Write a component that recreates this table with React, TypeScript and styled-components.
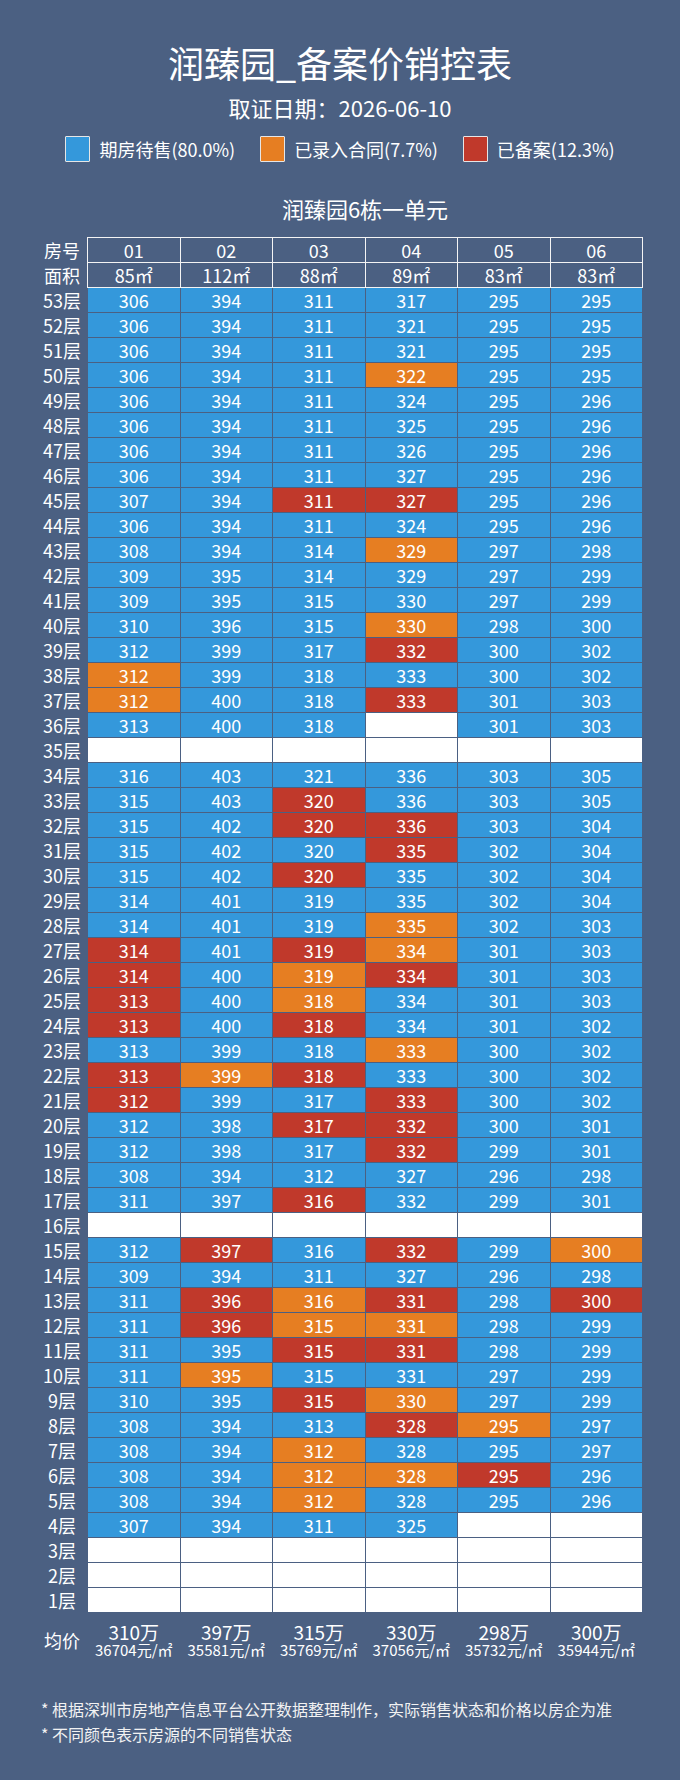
import styled, { createGlobalStyle } from "styled-components";

const BG = "#4b6082";

const GlobalStyle = createGlobalStyle`
  * { box-sizing: border-box; }
  body {
    margin: 0;
    background: ${BG};
    font-family: "Noto Sans CJK SC", "Noto Sans", sans-serif;
    color: #fff;
  }
`;

type Status = "sale" | "contract" | "filed" | "none";

const STATUS_COLORS: Record<Status, string> = {
  sale: "#3498db",
  contract: "#e67e22",
  filed: "#c0392b",
  none: "#ffffff",
};

const Page = styled.div`
  width: 680px;
  min-height: 1780px;
  padding-top: 40px;
  display: flex;
  flex-direction: column;
`;

const Title = styled.h1`
  margin: 0;
  font-size: 36px;
  line-height: 44px;
  font-weight: 400;
  text-align: center;
`;

const SubTitle = styled.div`
  margin-top: 8px;
  font-size: 22px;
  line-height: 30px;
  text-align: center;
`;

const Legend = styled.div`
  margin-top: 14px;
  display: flex;
  justify-content: center;
  gap: 25px;
`;

const LegendItem = styled.div`
  display: flex;
  align-items: center;
  gap: 9px;
  font-size: 18px;
  line-height: 26px;
`;

const Swatch = styled.span<{ $status: Status }>`
  width: 25px;
  height: 26px;
  border: 1px solid #e6e6e6;
  border-radius: 1px;
  background: ${({ $status }) => STATUS_COLORS[$status]};
`;

const Sheet = styled.div`
  padding: 0 38px 0 37px;
`;

const SectionTitle = styled.div`
  margin: 31px 0 14px 51px;
  font-size: 22px;
  line-height: 30px;
  text-align: center;
`;

const HeadRow = styled.div`
  display: grid;
  grid-template-columns: 50px 1fr;
  column-gap: 1px;
`;

const HeadLabels = styled.div`
  display: grid;
  grid-template-rows: 24px 24px;
  row-gap: 1px;
  padding-top: 1px;
`;

const HeadBox = styled.div`
  margin: 0 -1px;
  padding: 1px;
  display: grid;
  grid-template-columns: repeat(6, 1fr);
  grid-auto-rows: 24px;
  gap: 1px;
  background: #f4f4f4;
`;

const HeadCell = styled.div`
  background: ${BG};
  display: flex;
  align-items: center;
  justify-content: center;
  font-size: 18px;
`;

const RowLabel = styled.div`
  display: flex;
  align-items: center;
  justify-content: center;
  font-size: 18px;
  white-space: nowrap;
`;

const Grid = styled.div`
  display: grid;
  grid-template-columns: 50px repeat(6, 1fr);
  grid-auto-rows: 24px;
  gap: 1px;
`;

const Cell = styled.div<{ $status: Status }>`
  background: ${({ $status }) => STATUS_COLORS[$status]};
  display: flex;
  align-items: center;
  justify-content: center;
  font-size: 18px;
  color: #fff;
`;

const AvgGrid = styled.div`
  margin-top: 10px;
  display: grid;
  grid-template-columns: 50px repeat(6, 1fr);
  column-gap: 1px;
`;

const AvgCell = styled.div`
  display: flex;
  flex-direction: column;
  align-items: center;
  white-space: nowrap;
`;

const AvgPrice = styled.span`
  font-size: 19px;
  line-height: 20px;
`;

const AvgUnit = styled.span`
  font-size: 15px;
  line-height: 16px;
`;

const Notes = styled.div`
  margin-top: 39px;
  padding-left: 41px;
  font-size: 16px;
  line-height: 25px;
  color: #f2f2f2;
`;

const UNITS = ["01", "02", "03", "04", "05", "06"];
const AREAS = [85, 112, 88, 89, 83, 83];

// 53层 -> 1层, o = 已录入合同, r = 已备案, - = 无数据
const FLOORS = [
  "306 394 311 317 295 295",
  "306 394 311 321 295 295",
  "306 394 311 321 295 295",
  "306 394 311 322o 295 295",
  "306 394 311 324 295 296",
  "306 394 311 325 295 296",
  "306 394 311 326 295 296",
  "306 394 311 327 295 296",
  "307 394 311r 327r 295 296",
  "306 394 311 324 295 296",
  "308 394 314 329o 297 298",
  "309 395 314 329 297 299",
  "309 395 315 330 297 299",
  "310 396 315 330o 298 300",
  "312 399 317 332r 300 302",
  "312o 399 318 333 300 302",
  "312o 400 318 333r 301 303",
  "313 400 318 - 301 303",
  "- - - - - -",
  "316 403 321 336 303 305",
  "315 403 320r 336 303 305",
  "315 402 320r 336r 303 304",
  "315 402 320 335r 302 304",
  "315 402 320r 335 302 304",
  "314 401 319 335 302 304",
  "314 401 319 335o 302 303",
  "314r 401 319r 334o 301 303",
  "314r 400 319o 334r 301 303",
  "313r 400 318o 334 301 303",
  "313r 400 318r 334 301 302",
  "313 399 318 333o 300 302",
  "313r 399o 318r 333 300 302",
  "312r 399 317 333r 300 302",
  "312 398 317r 332r 300 301",
  "312 398 317 332r 299 301",
  "308 394 312 327 296 298",
  "311 397 316r 332 299 301",
  "- - - - - -",
  "312 397r 316 332r 299 300o",
  "309 394 311 327 296 298",
  "311 396r 316o 331r 298 300r",
  "311 396r 315o 331o 298 299",
  "311 395 315r 331r 298 299",
  "311 395o 315 331 297 299",
  "310 395 315r 330o 297 299",
  "308 394 313 328r 295o 297",
  "308 394 312o 328 295 297",
  "308 394 312o 328o 295r 296",
  "308 394 312o 328 295 296",
  "307 394 311 325 - -",
  "- - - - - -",
  "- - - - - -",
  "- - - - - -",
];

const AVERAGES = [
  { total: 310, unit: 36704 },
  { total: 397, unit: 35581 },
  { total: 315, unit: 35769 },
  { total: 330, unit: 37056 },
  { total: 298, unit: 35732 },
  { total: 300, unit: 35944 },
];

const parseCell = (raw: string): { price: string; status: Status } => {
  if (raw === "-") return { price: "", status: "none" };
  if (raw.endsWith("o")) return { price: raw.slice(0, -1), status: "contract" };
  if (raw.endsWith("r")) return { price: raw.slice(0, -1), status: "filed" };
  return { price: raw, status: "sale" };
};

export default function App() {
  return (
    <>
      <GlobalStyle />
      <Page>
        <Title>润臻园_备案价销控表</Title>
        <SubTitle>取证日期：2026-06-10</SubTitle>
        <Legend>
          <LegendItem>
            <Swatch $status="sale" />
            期房待售(80.0%)
          </LegendItem>
          <LegendItem>
            <Swatch $status="contract" />
            已录入合同(7.7%)
          </LegendItem>
          <LegendItem>
            <Swatch $status="filed" />
            已备案(12.3%)
          </LegendItem>
        </Legend>

        <Sheet>
          <SectionTitle>润臻园6栋一单元</SectionTitle>
          <HeadRow>
            <HeadLabels>
              <RowLabel>房号</RowLabel>
              <RowLabel>面积</RowLabel>
            </HeadLabels>
            <HeadBox>
              {UNITS.map((u) => (
                <HeadCell key={u}>{u}</HeadCell>
              ))}
              {AREAS.map((a, i) => (
                <HeadCell key={i}>{a}㎡</HeadCell>
              ))}
            </HeadBox>
          </HeadRow>

          <Grid>
            {FLOORS.map((line, i) => {
              const floor = 53 - i;
              return [
                <RowLabel key={`l${floor}`}>{floor}层</RowLabel>,
                ...line.split(" ").map((raw, j) => {
                  const { price, status } = parseCell(raw);
                  return (
                    <Cell key={`${floor}-${j}`} $status={status}>
                      {price}
                    </Cell>
                  );
                }),
              ];
            })}
          </Grid>

          <AvgGrid>
            <RowLabel>均价</RowLabel>
            {AVERAGES.map((a, i) => (
              <AvgCell key={i}>
                <AvgPrice>{a.total}万</AvgPrice>
                <AvgUnit>{a.unit}元/㎡</AvgUnit>
              </AvgCell>
            ))}
          </AvgGrid>
        </Sheet>

        <Notes>
          <div>* 根据深圳市房地产信息平台公开数据整理制作，实际销售状态和价格以房企为准</div>
          <div>* 不同颜色表示房源的不同销售状态</div>
        </Notes>
      </Page>
    </>
  );
}
